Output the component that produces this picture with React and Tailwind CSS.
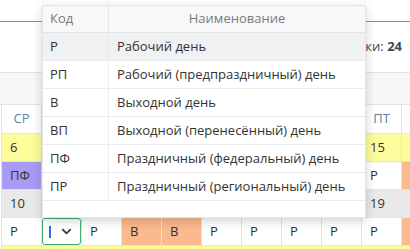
import React from 'react';
import { ChevronDown } from 'lucide-react';

const days = ['СР', 'ЧТ', 'ПТ', 'СБ', 'ВС', 'ПН', 'ВТ', 'СР', 'ЧТ', 'ПТ', 'СБ'];

const codes = [
  { code: 'Р', name: 'Рабочий день' },
  { code: 'РП', name: 'Рабочий (предпраздничный) день' },
  { code: 'В', name: 'Выходной день' },
  { code: 'ВП', name: 'Выходной (перенесённый) день' },
  { code: 'ПФ', name: 'Праздничный (федеральный) день' },
  { code: 'ПР', name: 'Праздничный (региональный) день' },
];

const tone = {
  date: 'bg-[#fdfd9c]',
  gray: 'bg-[#e9e9ea]',
  off: 'bg-[#fbba8e]',
  fed: 'bg-[#a99bf4]',
  work: 'bg-white',
};

const rows = [
  { kind: 'date', cells: [6, 7, 8, 9, 10, 11, 12, 13, 14, 15, 16].map((d) => ({ t: d, c: 'date' })) },
  {
    kind: 'code',
    cells: ['ПФ', 'Р', 'Р', 'В', 'В', 'Р', 'Р', 'Р', 'Р', 'Р', 'В'].map((t, i) => ({
      t,
      c: i === 0 ? 'fed' : t === 'В' ? 'off' : 'work',
    })),
  },
  { kind: 'date', cells: [10, 11, 12, 13, 14, 15, 16, 17, 18, 19, 20].map((d) => ({ t: d, c: 'gray' })) },
  {
    kind: 'code',
    cells: ['Р', null, 'Р', 'В', 'В', 'Р', 'Р', 'Р', 'Р', 'Р', 'В'].map((t) => ({
      t,
      c: t === 'В' ? 'off' : 'work',
    })),
  },
  { kind: 'date', cells: [20, 21, 22, 23, 24, 25, 26, 27, 28, 29, 30].map((d) => ({ t: d, c: 'date' })) },
];

const cellW = (i) => (i === 0 ? 'w-[41px] border-l' : 'w-[40px]');

const EditCell = () => (
  <div className="flex h-full w-full items-center justify-between rounded-[3px] border border-[#3fae6a] pl-[6px] pr-[6px] -mr-px">
    <span className="h-[12px] w-[2px] bg-[#2f6fe0]" />
    <ChevronDown className="h-[15px] w-[15px] text-[#3a3f47]" strokeWidth={3} />
  </div>
);

export default function App() {
  return (
    <div className="relative h-[249px] w-[410px] overflow-hidden bg-white font-['Open_Sans',sans-serif] text-[13px] text-[#333]">
      <div className="h-[22px] border-b border-[#4caf7e]" />
      <div className="flex h-[50px] items-center justify-end pr-[8px] text-[#3d4755]">
        Строки:&nbsp;<b className="font-bold">24</b>
      </div>
      <div className="h-[33px] border-y border-[#e2e3e7] bg-[#f7f7f8]" />

      <div className="ml-px flex flex-col">
        <div className="flex h-[29px]">
          {days.map((d, i) => (
            <div
              key={i}
              className={`${cellW(i)} flex shrink-0 items-center justify-center border-r border-b border-[#e2e4e8] text-[#5f7fa8]`}
            >
              {d}
            </div>
          ))}
        </div>
        {rows.map((r, ri) => (
          <div key={ri} className="flex h-[28px]">
            {r.cells.map((c, i) => (
              <div
                key={i}
                className={`${cellW(i)} ${tone[c.c]} flex shrink-0 items-center border-r border-b border-[#e2e4e8] ${
                  c.t === null ? '' : 'pl-[8px]'
                }`}
              >
                {c.t === null ? <EditCell /> : c.t}
              </div>
            ))}
          </div>
        ))}
      </div>

      <div className="absolute left-[42px] top-[5px] w-[324px] border border-[#e4e5e8] bg-white shadow-[0_3px_10px_rgba(0,0,0,0.18)]">
        <div className="flex h-[27px] border-b border-[#e4e5e8] bg-[#f8f8f9] text-[#7a7a7a]">
          <div className="flex w-[66px] items-center border-r border-[#e4e5e8] pl-[7px]">Код</div>
          <div className="flex flex-1 items-center justify-center">Наименование</div>
        </div>
        {codes.map((c, i) => (
          <div
            key={c.code}
            className={`flex h-[28px] border-b border-[#ebebed] ${i === 0 ? 'bg-[#f0f1f3]' : ''}`}
          >
            <div className="flex w-[66px] items-center border-r border-[#ebebed] pl-[7px]">{c.code}</div>
            <div className="flex flex-1 items-center pl-[8px]">{c.name}</div>
          </div>
        ))}
        <div className="h-[16px]" />
      </div>
    </div>
  );
}
